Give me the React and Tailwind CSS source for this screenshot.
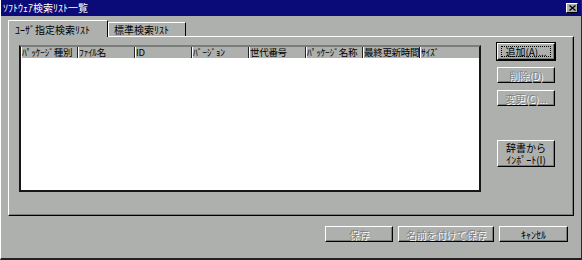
import React from "react";

const font = "font-['Noto_Sans_CJK_JP','Noto_Sans',sans-serif]";

const columns = ["ﾊﾟｯｹｰｼﾞ種別", "ﾌｧｲﾙ名", "ID", "ﾊﾞｰｼﾞｮﾝ", "世代番号", "ﾊﾟｯｹｰｼﾞ名称", "最終更新時間"];

const Btn = ({ children, disabled, primary, className = "" }) => (
  <div
    className={`flex items-center justify-center whitespace-nowrap bg-[#aeb0ad] text-[10px] leading-[11px] border-t border-l border-t-white border-l-white border-r border-b border-r-black border-b-black shadow-[inset_-1px_-1px_0_#7b7d7a] ${
      primary ? "outline outline-1 outline-black" : ""
    } ${disabled ? "text-[#7f817e] [text-shadow:1px_1px_0_#fff]" : "text-black"} ${className}`}
  >
    {primary ? (
      <span className="border border-dotted border-black px-[3px] h-[11px] flex items-center whitespace-nowrap">{children}</span>
    ) : (
      children
    )}
  </div>
);

export default function App() {
  return (
    <div className={`w-[582px] h-[260px] bg-[#aeb0ad] flex flex-col border-l border-l-white border-r border-r-[#2a2a2a] border-b-2 border-b-[#222] ${font}`}>
      <div className="h-[16px] bg-[#0a0a78] flex items-center justify-between pl-[2px] pr-[3px]">
        <span className="text-white text-[10px] leading-[12px] whitespace-nowrap">ｿﾌﾄｳｪｱ検索ﾘｽﾄ一覧</span>
        <div className="w-[12px] h-[10px] bg-[#aeb0ad] border-t border-l border-white border-r border-b border-r-black border-b-black flex items-center justify-center">
          <svg width="7" height="6" viewBox="0 0 7 6">
            <path d="M0.5 0.5 L6.5 5.5 M6.5 0.5 L0.5 5.5" stroke="#000" strokeWidth="1.4" />
          </svg>
        </div>
      </div>

      <div className="flex-1 flex flex-col px-[7px] pt-[4px]">
        <div className="h-[16px] flex items-end">
          <div className="relative z-10 h-[17px] mb-[-1px] w-[100px] bg-[#aeb0ad] border-t border-l border-white border-r border-r-black flex items-center pl-[6px] text-[10px] text-black whitespace-nowrap">
            ﾕｰｻﾞ指定検索ﾘｽﾄ
          </div>
          <div className="h-[14px] w-[78px] border-t border-l border-white border-r border-r-black flex items-center pl-[5px] text-[10px] text-black whitespace-nowrap">
            標準検索ﾘｽﾄ
          </div>
        </div>

        <div className="h-[180px] w-[566px] border-t border-l border-white border-r border-b border-r-black border-b-black shadow-[inset_-1px_-1px_0_#7b7d7a] flex pl-[10px] pt-[6px]">
          <div className="mt-[2px] w-[462px] h-[147px] bg-white border-2 border-[#161616] border-t-[#7b7d7a] flex flex-col">
            <div className="h-[11px] bg-[#aeb0ad] flex items-center text-[9.5px] leading-[11px] text-black tracking-[-0.3px]">
              {columns.map((c) => (
                <div key={c} className="w-[57px] h-full flex items-center border-l border-l-white border-r border-r-[#222] whitespace-nowrap">
                  {c}
                </div>
              ))}
              <div className="flex-1 h-full flex items-center border-l border-l-white whitespace-nowrap">ｻｲｽﾞ</div>
            </div>
          </div>

          <div className="ml-[16px] flex flex-col">
            <Btn primary className="w-[58px] h-[17px]">追加(A)...</Btn>
            <Btn disabled className="w-[58px] h-[16px] mt-[7px]">削除(D)</Btn>
            <Btn disabled className="w-[58px] h-[16px] mt-[7px]">変更(C)...</Btn>
            <Btn className="w-[58px] h-[27px] mt-[34px] flex-col">
              <span className="leading-[12px]">辞書から</span>
              <span className="leading-[12px]">ｲﾝﾎﾟｰﾄ(I)</span>
            </Btn>
          </div>
        </div>

        <div className="flex justify-end gap-[5px] mt-[10px] pr-[6px]">
          <Btn disabled className="w-[68px] h-[16px]">保存</Btn>
          <Btn disabled className="w-[96px] h-[16px]">名前を付けて保存</Btn>
          <Btn className="w-[69px] h-[16px]">ｷｬﾝｾﾙ</Btn>
        </div>
      </div>
    </div>
  );
}
